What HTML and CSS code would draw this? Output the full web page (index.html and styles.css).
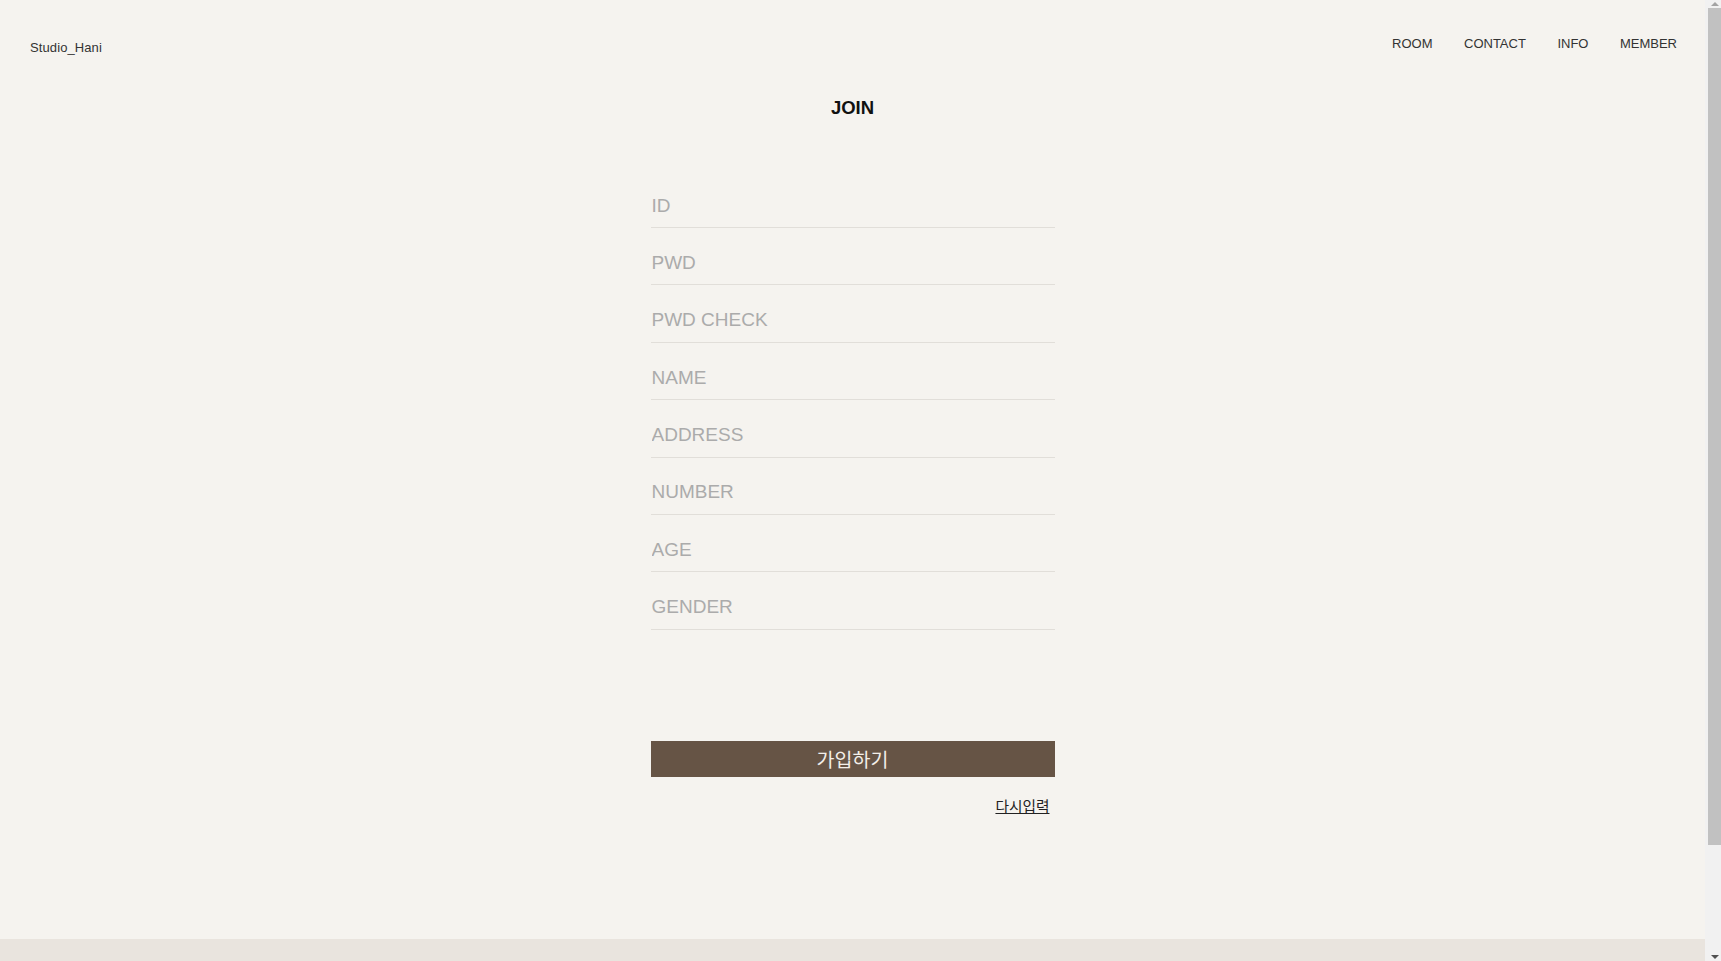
FILE: index.html
```html
<!DOCTYPE html>
<html lang="ko">
<head>
<meta charset="utf-8">
<title>Studio_Hani - JOIN</title>
<link rel="stylesheet" href="styles.css">
</head>
<body>
<div class="window">
  <div class="page">
    <header class="header">
      <a class="logo" href="#">Studio_Hani</a>
      <nav class="nav">
        <a href="#">ROOM</a>
        <a href="#">CONTACT</a>
        <a href="#">INFO</a>
        <a href="#">MEMBER</a>
      </nav>
    </header>
    <main class="main">
      <h1 class="title">JOIN</h1>
      <form class="join-form">
        <input class="field" type="text" placeholder="ID">
        <input class="field" type="password" placeholder="PWD">
        <input class="field" type="password" placeholder="PWD CHECK">
        <input class="field" type="text" placeholder="NAME">
        <input class="field" type="text" placeholder="ADDRESS">
        <input class="field" type="text" placeholder="NUMBER">
        <input class="field" type="text" placeholder="AGE">
        <input class="field" type="text" placeholder="GENDER">
        <button class="submit" type="submit">가입하기</button>
        <div class="reset-row"><a class="reset" href="#">다시입력</a></div>
      </form>
    </main>
    <footer class="footer"></footer>
  </div>
  <div class="scrollbar" aria-hidden="true">
    <div class="sb-btn"><span class="sb-arrow up"></span></div>
    <div class="sb-thumb"></div>
    <div class="sb-track"></div>
    <div class="sb-btn"><span class="sb-arrow down"></span></div>
  </div>
</div>
</body>
</html>
```
FILE: styles.css
```css
html, body {
  margin: 0;
  padding: 0;
  height: 100%;
  overflow: hidden;
}
body {
  background: #f5f3ef;
  font-family: "Liberation Sans", Arial, "Noto Sans CJK KR", sans-serif;
  color: #333;
}
a {
  color: inherit;
  text-decoration: none;
}
.window {
  display: flex;
  height: 100vh;
}
.page {
  flex: 1;
  min-width: 0;
  overflow: hidden;
  display: flex;
  flex-direction: column;
}
.header {
  display: flex;
  justify-content: space-between;
  align-items: flex-start;
  padding: 0 28px 0 30px;
  height: 56px;
  flex-shrink: 0;
}
.logo {
  margin-top: 40px;
  font-size: 13px;
  line-height: 15px;
  color: #333;
  letter-spacing: 0.1px;
}
.nav {
  display: flex;
  gap: 31.5px;
  margin-top: 36px;
  font-size: 13px;
  line-height: 15px;
}
.nav a {
  color: #333;
}
.main {
  display: flex;
  flex-direction: column;
  align-items: center;
  flex-shrink: 0;
}
.title {
  margin: 41px 0 0;
  font-size: 18.5px;
  line-height: 21px;
  font-weight: bold;
  color: #111;
}
.join-form {
  width: 404px;
  margin-top: 66px;
  display: flex;
  flex-direction: column;
  gap: 13.4px;
}
.field {
  box-sizing: border-box;
  width: 100%;
  height: 44px;
  margin: 0;
  padding: 0 1px;
  border: 0;
  border-bottom: 1.5px solid #e1ded9;
  background: transparent;
  font-family: "Liberation Sans", Arial, sans-serif;
  font-size: 19px;
  color: #333;
  outline: none;
}
.field::placeholder {
  color: #ababab;
}
.submit {
  margin-top: 98px;
  height: 36px;
  border: 0;
  background: #665445;
  color: #f3efe9;
  font-family: "Noto Sans CJK KR", sans-serif;
  font-size: 19.5px;
  line-height: 36px;
  padding: 0;
}
.reset-row {
  display: flex;
  justify-content: flex-end;
  padding-right: 5px;
  margin-top: 5px;
}
.reset {
  font-family: "Noto Sans CJK KR", sans-serif;
  font-size: 14.7px;
  line-height: 20px;
  color: #222;
  text-decoration: underline;
}
.footer {
  margin-top: 123px;
  height: 122px;
  flex-shrink: 0;
  background: #e9e4de;
}
.scrollbar {
  width: 16px;
  flex-shrink: 0;
  display: flex;
  flex-direction: column;
  background: #f1f1f1;
}
.sb-btn {
  height: 8px;
  display: flex;
  align-items: center;
  justify-content: center;
  padding-left: 3px;
}
.sb-arrow {
  width: 0;
  height: 0;
  border-left: 4px solid transparent;
  border-right: 4px solid transparent;
}
.sb-arrow.up {
  border-bottom: 4px solid #a3a3a3;
}
.sb-arrow.down {
  border-top: 4px solid #505050;
}
.sb-thumb {
  height: 837px;
  margin-left: 3px;
  background: #c1c1c1;
}
.sb-track {
  flex: 1;
}
```
